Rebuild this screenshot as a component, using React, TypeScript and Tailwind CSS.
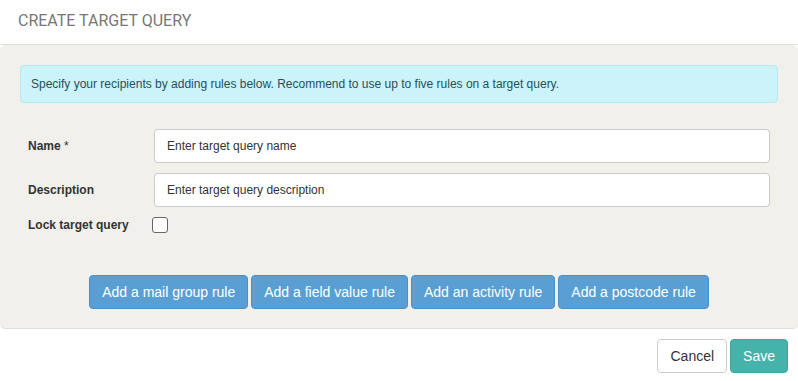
const ruleButtons = [
  'Add a mail group rule',
  'Add a field value rule',
  'Add an activity rule',
  'Add a postcode rule',
];

export default function App() {
  return (
    <div className="w-[798px] h-[381px] bg-white font-['Liberation_Sans',Arial,sans-serif] text-[#333] flex flex-col">
      <div className="h-[45px] border-b border-[#dde1e6] px-[18px] flex items-center">
        <h1 className="font-['Roboto',sans-serif] text-[16px] text-[#777] uppercase pb-[2px]">Create target query</h1>
      </div>

      <div className="h-[284px] bg-[#f2f0eb] rounded-[5px] border-b border-[#dde1e6] px-[20px] pt-[20px]">
        <div className="h-[38px] rounded-[4px] border border-[#b5e9f3] bg-[#cdf3fa] px-[10px] flex items-center text-[12px] text-[#24505c]">
          Specify your recipients by adding rules below. Recommend to use up to five rules on a target query.
        </div>

        <div className="pl-[8px] pr-[8px] pt-[26px] flex flex-col gap-[10px]">
          <div className="flex items-center">
            <label className="w-[126px] text-[12px] font-bold">
              Name <span className="font-normal">*</span>
            </label>
            <input
              className="flex-1 h-[34px] rounded-[4px] border border-[#ccc] bg-white px-[12px] text-[12px] text-[#333] placeholder:text-[#333] outline-none"
              placeholder="Enter target query name"
            />
          </div>
          <div className="flex items-center">
            <label className="w-[126px] text-[12px] font-bold">Description</label>
            <input
              className="flex-1 h-[34px] rounded-[4px] border border-[#ccc] bg-white px-[12px] text-[12px] text-[#333] placeholder:text-[#333] outline-none"
              placeholder="Enter target query description"
            />
          </div>
          <div className="flex items-center h-[16px]">
            <label className="w-[124px] text-[12px] font-bold">Lock target query</label>
            <span className="w-[16px] h-[16px] rounded-[3px] border border-[#666] bg-white" />
          </div>
        </div>

        <div className="pt-[42px] flex justify-center gap-[3px]">
          {ruleButtons.map((b) => (
            <button
              key={b}
              type="button"
              className="h-[34px] px-[12px] rounded-[4px] border border-[#4a90c8] bg-[#599fd3] text-white text-[14px]"
            >
              {b}
            </button>
          ))}
        </div>
      </div>

      <div className="flex-1 flex justify-end items-start gap-[3px] pt-[10px] pr-[10px]">
        <button type="button" className="h-[34px] px-[12px] rounded-[4px] border border-[#ccc] bg-white text-[14px] text-[#333]">
          Cancel
        </button>
        <button type="button" className="h-[34px] px-[12px] rounded-[4px] border border-[#3da69c] bg-[#45b3a9] text-[14px] text-white">
          Save
        </button>
      </div>
    </div>
  );
}
